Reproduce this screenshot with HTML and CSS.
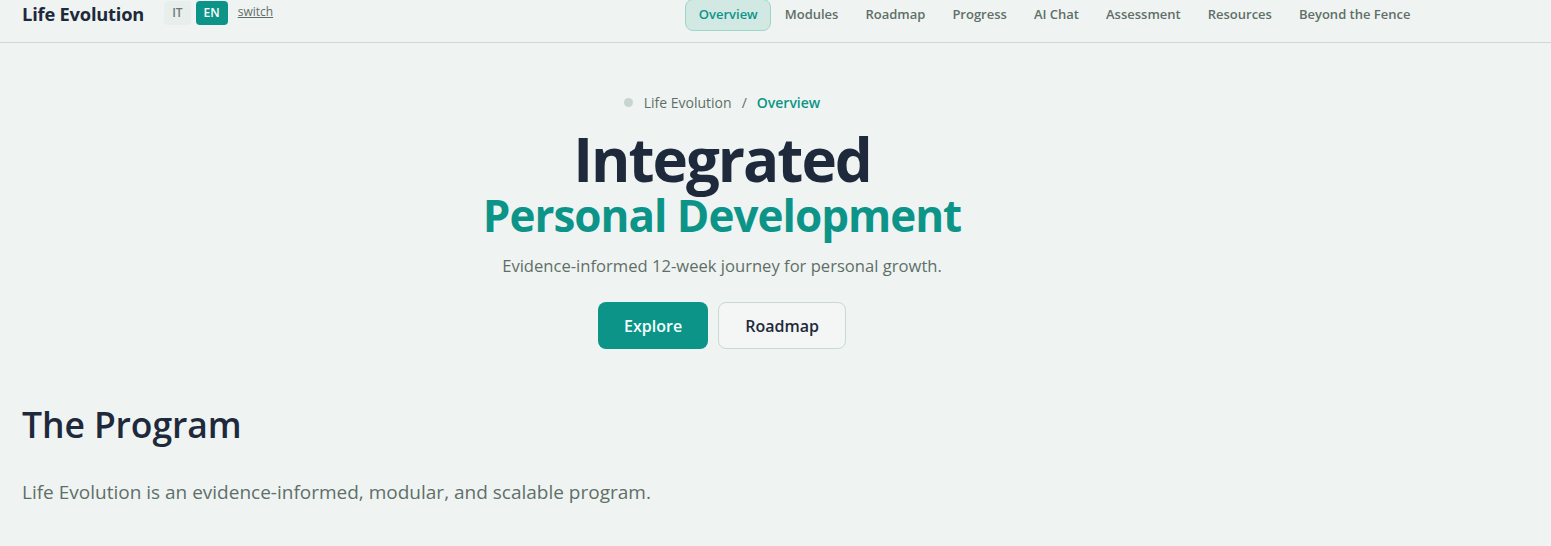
FILE: index.html
```html
<!DOCTYPE html>
<html lang="en">
<head>
<meta charset="utf-8">
<title>Life Evolution</title>
<link rel="stylesheet" href="styles.css">
</head>
<body>
<header class="topbar">
  <div class="brand">Life Evolution</div>
  <div class="lang">
    <span class="lang-btn">IT</span>
    <span class="lang-btn active">EN</span>
    <a class="switch" href="#">switch</a>
  </div>
  <nav class="nav">
    <a class="nav-item current" href="#">Overview</a>
    <a class="nav-item" href="#">Modules</a>
    <a class="nav-item" href="#">Roadmap</a>
    <a class="nav-item" href="#">Progress</a>
    <a class="nav-item" href="#">AI Chat</a>
    <a class="nav-item" href="#">Assessment</a>
    <a class="nav-item" href="#">Resources</a>
    <a class="nav-item" href="#">Beyond the Fence</a>
  </nav>
</header>
<main class="container">
  <section class="hero">
    <div class="crumbs">
      <span class="dot"></span>
      <span class="crumb">Life Evolution</span>
      <span class="sep">/</span>
      <span class="crumb here">Overview</span>
    </div>
    <h1 class="title">Integrated</h1>
    <div class="subtitle">Personal Development</div>
    <p class="lead">Evidence-informed 12-week journey for personal growth.</p>
    <div class="actions">
      <a class="btn primary" href="#">Explore</a>
      <a class="btn ghost" href="#">Roadmap</a>
    </div>
  </section>
  <section class="program">
    <h2>The Program</h2>
    <p>Life Evolution is an evidence-informed, modular, and scalable program.</p>
  </section>
</main>
</body>
</html>
```
FILE: styles.css
```css
* { box-sizing: border-box; }
html, body { margin: 0; padding: 0; }
body {
  background: #eff4f2;
  font-family: "Open Sans", "Noto Sans", "Liberation Sans", sans-serif;
  color: #1e293b;
}
a { text-decoration: none; color: inherit; }

.topbar {
  height: 43px;
  border-bottom: 1px solid #cbdcd6;
  display: flex;
  align-items: flex-start;
  padding: 0 127px 0 22px;
}
.brand {
  font-size: 18.3px;
  font-weight: 700;
  color: #1e293b;
  line-height: 28px;
  letter-spacing: -0.2px;
}
.lang {
  display: flex;
  align-items: center;
  gap: 5px;
  margin-left: 20px;
  margin-top: 1px;
}
.lang-btn {
  font-size: 12px;
  font-weight: 600;
  padding: 0 8px;
  height: 24px;
  line-height: 24px;
  border-radius: 4px;
  background: #e8eeec;
  color: #6b7c76;
}
.lang-btn.active {
  background: #0d9488;
  color: #ffffff;
}
.switch {
  font-size: 12px;
  color: #5f6f68;
  text-decoration: underline;
  margin-left: 5px;
  margin-top: -4px;
}
.nav {
  margin-left: auto;
  display: flex;
  align-items: flex-start;
}
.nav-item {
  font-size: 13px;
  font-weight: 600;
  color: #5f6f68;
  padding: 0 12.5px;
  height: 32px;
  line-height: 28px;
  border: 1px solid transparent;
  border-radius: 8px;
  margin-top: -1px;
}
.nav-item.current {
  background: #d2e8e3;
  border-color: #9fd5ca;
  color: #0d9488;
}

.container {
  width: 1444px;
  padding: 0 22px;
}
.hero {
  display: flex;
  flex-direction: column;
  align-items: center;
  padding-top: 49px;
}
.crumbs {
  display: flex;
  align-items: center;
  font-size: 14px;
  color: #5f6f68;
  height: 20px;
}
.dot {
  width: 9px;
  height: 9px;
  border-radius: 50%;
  background: #c6d5d0;
  margin-right: 11px;
}
.sep { margin: 0 10px; }
.crumb.here { color: #0d9488; font-weight: 600; }
.title {
  margin: 18px 0 0;
  font-size: 60px;
  font-weight: 700;
  line-height: 58px;
  color: #1e293b;
  letter-spacing: -2px;
}
.subtitle {
  margin-top: 5px;
  font-size: 44px;
  font-weight: 700;
  line-height: 44px;
  color: #0d9488;
  letter-spacing: -1px;
}
.lead {
  margin: 17px 0 0;
  font-size: 16.6px;
  line-height: 24px;
  color: #5f6f68;
}
.actions {
  display: flex;
  gap: 10px;
  margin-top: 24px;
}
.btn {
  padding-top: 2px;
  line-height: 43px;
  border-radius: 8px;
  font-size: 16px;
  font-weight: 600;
  border: 1px solid transparent;
}
.btn.primary {
  background: #0d9488;
  color: #f4fffd;
  padding-left: 25px;
  padding-right: 25px;
}
.btn.ghost {
  background: #f3f6f5;
  border-color: #c8d8d3;
  color: #1e293b;
  padding-left: 26px;
  padding-right: 26px;
}

.program {
  padding-top: 51px;
}
.program h2 {
  margin: 0;
  font-size: 35.5px;
  font-weight: 600;
  line-height: 48px;
  color: #1e293b;
  letter-spacing: -0.1px;
}
.program p {
  margin: 30px 0 0;
  font-size: 19px;
  line-height: 28px;
  color: #5f6f68;
}
```
